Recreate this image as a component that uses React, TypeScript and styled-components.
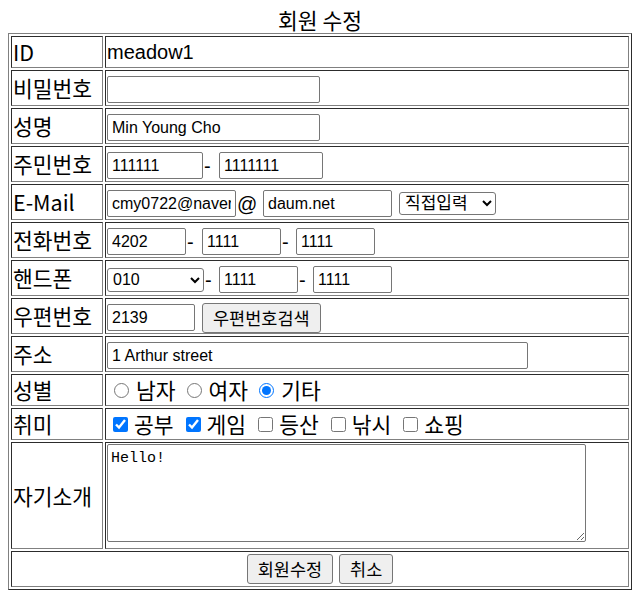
import React from 'react';
import styled, { createGlobalStyle } from 'styled-components';

const GlobalStyle = createGlobalStyle`
  body {
    margin: 8px;
    background: #fff;
    color: #000;
    font-family: "Noto Sans CJK KR", "Noto Sans", sans-serif;
    font-size: 20px;
  }
`;

const FormTable = styled.table`
  width: 624px;
  border: 1px outset grey;
  border-spacing: 2px;
  font-size: 20px;
`;

const Caption = styled.caption`
  height: 25px;
  text-align: center;
  font: 21.5px/24px "Noto Sans CJK KR", sans-serif;
`;

const LabelCell = styled.td`
  width: 88px;
  padding: 1px;
  border: 1px inset grey;
  font: 21.5px/28px "Noto Sans CJK KR", sans-serif;
  white-space: nowrap;
`;

const FieldCell = styled.td<{ $center?: boolean }>`
  padding: 1px;
  border: 1px inset grey;
  font: 20px/28px "Liberation Sans", "Noto Sans CJK KR", sans-serif;
  text-align: ${({ $center }) => ($center ? 'center' : 'left')};
`;

const Fields = styled.div<{ $center?: boolean }>`
  display: flex;
  align-items: center;
  justify-content: ${({ $center }) => ($center ? 'center' : 'flex-start')};
  gap: ${({ $center }) => ($center ? '6px' : '0')};
  height: 32px;
  padding-top: ${({ $center }) => ($center ? '0' : '3px')};
  box-sizing: border-box;
`;

const TextInput = styled.input<{ $w: number }>`
  flex: none;
  box-sizing: border-box;
  width: ${({ $w }) => $w}px;
  height: 27px;
  margin: 0;
  padding: 0 4px;
  border: 1px solid #767676;
  border-radius: 2px;
  background: #fff;
  color: #000;
  font: 16px "Liberation Sans", "Noto Sans CJK KR", sans-serif;
`;

const Sep = styled.span<{ $w: number }>`
  flex: none;
  width: ${({ $w }) => $w}px;
  padding-left: 1px;
  box-sizing: border-box;
`;

const Gap = styled.span<{ $w: number }>`
  flex: none;
  width: ${({ $w }) => $w}px;
`;

const Select = styled.select<{ $w: number; $h: number; $size: number }>`
  flex: none;
  box-sizing: border-box;
  width: ${({ $w }) => $w}px;
  height: ${({ $h }) => $h}px;
  margin: 0;
  padding: 0 0 0 1px;
  border: 1px solid #767676;
  border-radius: 3px;
  background: #fff;
  color: #000;
  font: ${({ $size }) => $size}px "Liberation Sans", "Noto Sans CJK KR", sans-serif;
`;

const Button = styled.button`
  flex: none;
  height: 30px;
  margin: 0;
  padding: 0 10px;
  border: 1px solid #767676;
  border-radius: 3px;
  background: #efefef;
  color: #000;
  font: 17.5px/1 "Noto Sans CJK KR", sans-serif;
`;

const TextArea = styled.textarea`
  display: block;
  box-sizing: border-box;
  width: 479px;
  height: 98px;
  margin: 0 0 5px;
  padding: 5px 3px;
  border: 1px solid #767676;
  border-radius: 2px;
  font: 15px "Liberation Mono", monospace;
  color: #000;
`;

const Choices = styled.div<{ $start: number }>`
  display: flex;
  align-items: center;
  height: 28px;
  padding-left: ${({ $start }) => $start}px;
  font: 21.5px/28px "Noto Sans CJK KR", sans-serif;
`;

const Choice = styled.label<{ $gap: number; $after: number }>`
  display: inline-flex;
  align-items: center;
  gap: ${({ $gap }) => $gap}px;
  margin-right: ${({ $after }) => $after}px;
`;

const Tick = styled.input`
  width: 15px;
  height: 15px;
  margin: 0;
`;

const genders = ['남자', '여자', '기타'];
const hobbies = [
  { name: '공부', on: true },
  { name: '게임', on: true },
  { name: '등산', on: false },
  { name: '낚시', on: false },
  { name: '쇼핑', on: false },
];

const Row: React.FC<{ label: string; children: React.ReactNode }> = ({ label, children }) => (
  <tr>
    <LabelCell>{label}</LabelCell>
    <FieldCell>{children}</FieldCell>
  </tr>
);

export default function App() {
  return (
    <>
      <GlobalStyle />
      <FormTable>
        <Caption>회원 수정</Caption>
        <tbody>
          <Row label="ID">meadow1</Row>
          <Row label="비밀번호">
            <Fields>
              <TextInput $w={213} type="password" />
            </Fields>
          </Row>
          <Row label="성명">
            <Fields>
              <TextInput $w={213} defaultValue="Min Young Cho" />
            </Fields>
          </Row>
          <Row label="주민번호">
            <Fields>
              <TextInput $w={96} defaultValue="111111" />
              <Sep $w={16}>-</Sep>
              <TextInput $w={104} defaultValue="1111111" />
            </Fields>
          </Row>
          <Row label="E-Mail">
            <Fields>
              <TextInput $w={129} defaultValue="cmy0722@naver.com" />
              <Sep $w={27}>@</Sep>
              <TextInput $w={129} defaultValue="daum.net" />
              <Gap $w={7} />
              <Select $w={97} $h={23} $size={17} defaultValue="direct">
                <option value="direct">직접입력</option>
                <option value="naver">naver.com</option>
                <option value="daum">daum.net</option>
                <option value="gmail">gmail.com</option>
              </Select>
            </Fields>
          </Row>
          <Row label="전화번호">
            <Fields>
              <TextInput $w={79} defaultValue="4202" />
              <Sep $w={16}>-</Sep>
              <TextInput $w={79} defaultValue="1111" />
              <Sep $w={15}>-</Sep>
              <TextInput $w={79} defaultValue="1111" />
            </Fields>
          </Row>
          <Row label="핸드폰">
            <Fields>
              <Select $w={97} $h={24} $size={16} defaultValue="010">
                <option value="010">010</option>
                <option value="011">011</option>
                <option value="016">016</option>
                <option value="017">017</option>
              </Select>
              <Sep $w={15}>-</Sep>
              <TextInput $w={79} defaultValue="1111" />
              <Sep $w={15}>-</Sep>
              <TextInput $w={79} defaultValue="1111" />
            </Fields>
          </Row>
          <Row label="우편번호">
            <Fields>
              <TextInput $w={88} defaultValue="2139" />
              <Gap $w={7} />
              <Button type="button">우편번호검색</Button>
            </Fields>
          </Row>
          <Row label="주소">
            <Fields>
              <TextInput $w={421} defaultValue="1 Arthur street" />
            </Fields>
          </Row>
          <Row label="성별">
            <Choices $start={7}>
              {genders.map((g) => (
                <Choice key={g} $gap={7} $after={11}>
                  <Tick type="radio" name="gender" defaultChecked={g === '기타'} />
                  {g}
                </Choice>
              ))}
            </Choices>
          </Row>
          <Row label="취미">
            <Choices $start={6}>
              {hobbies.map((h) => (
                <Choice key={h.name} $gap={6} $after={12}>
                  <Tick type="checkbox" defaultChecked={h.on} />
                  {h.name}
                </Choice>
              ))}
            </Choices>
          </Row>
          <Row label="자기소개">
            <TextArea defaultValue="Hello!" />
          </Row>
          <tr>
            <FieldCell colSpan={2} $center>
              <Fields $center>
                <Button type="submit">회원수정</Button>
                <Button type="button">취소</Button>
              </Fields>
            </FieldCell>
          </tr>
        </tbody>
      </FormTable>
    </>
  );
}
